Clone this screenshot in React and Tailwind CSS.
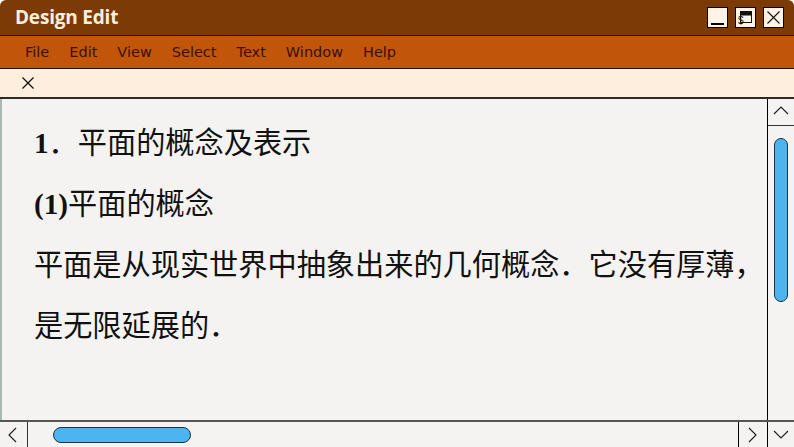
import React from "react";

const menuItems = ["File", "Edit", "View", "Select", "Text", "Window", "Help"];

const Chevron = ({ dir }) => {
  const pts = {
    up: "2,11 9,4 16,11",
    down: "2,5 9,12 16,5",
    left: "11,2 4,9 11,16",
    right: "5,2 12,9 5,16",
  }[dir];
  return (
    <svg width="18" height="18" viewBox="0 0 18 18" fill="none" stroke="#222" strokeWidth="1.2">
      <polyline points={pts} />
    </svg>
  );
};

const WinButton = ({ children }) => (
  <div className="w-[21px] h-[21px] border border-black bg-[#fdf3e6] flex items-center justify-center">
    {children}
  </div>
);

export default function App() {
  return (
    <div className="w-[794px] h-[447px] flex flex-col overflow-hidden bg-[#f5f3f1] rounded-t-[6px]">
      {/* title bar */}
      <div className="h-[36px] shrink-0 bg-[#7b3a06] border-b border-[#2b1200] flex items-center justify-between pl-[15px] pr-[10px]">
        <span className="text-[19px] font-bold text-[#fbeedd] font-['Open_Sans',sans-serif] tracking-[-0.2px]">
          Design Edit
        </span>
        <div className="flex items-center gap-[7px]">
          <WinButton>
            <div className="w-[13px] h-[2px] bg-black mt-[12px]" />
          </WinButton>
          <WinButton>
            <svg width="15" height="15" viewBox="0 0 15 15">
              <rect x="2.5" y="1.5" width="11" height="11" fill="none" stroke="#111" />
              <rect x="2.5" y="1.5" width="11" height="4" fill="#111" />
              <text x="0" y="14" fontSize="10" fontFamily="Liberation Sans, sans-serif" fill="#111">$</text>
            </svg>
          </WinButton>
          <WinButton>
            <svg width="15" height="15" viewBox="0 0 15 15" stroke="#111" strokeWidth="1.1">
              <line x1="1.5" y1="1.5" x2="13.5" y2="13.5" />
              <line x1="13.5" y1="1.5" x2="1.5" y2="13.5" />
            </svg>
          </WinButton>
        </div>
      </div>

      {/* menu bar */}
      <div className="h-[33px] shrink-0 bg-[#c1560b] border-b border-[#2b1200] flex items-center pt-[2px] pl-[25px] gap-[20px] font-['DejaVu_Sans',sans-serif] text-[14.5px] text-[#3a1000]">
        {menuItems.map((m) => (
          <span key={m}>{m}</span>
        ))}
      </div>

      {/* tab bar */}
      <div className="h-[30px] shrink-0 bg-[#fdeedd] border-b-2 border-[#2a2a2a] flex items-center pl-[21px]">
        <svg width="14" height="14" viewBox="0 0 14 14" stroke="#111" strokeWidth="1.2">
          <line x1="1.5" y1="1.5" x2="12.5" y2="12.5" />
          <line x1="12.5" y1="1.5" x2="1.5" y2="12.5" />
        </svg>
      </div>

      {/* content */}
      <div className="flex-1 flex min-h-0">
        <div className="flex-1 min-w-0 border-l-2 border-[#a9b8b2] pl-[32px] pt-[14px] text-[29.2px] leading-[61px] text-[#111] font-['Liberation_Serif','Noto_Sans_CJK_SC',serif]">
          <div>
            <b>1</b>．平面的概念及表示
          </div>
          <div>
            <b>(1)</b>平面的概念
          </div>
          <div className="whitespace-nowrap">平面是从现实世界中抽象出来的几何概念．它没有厚薄，</div>
          <div>是无限延展的．</div>
        </div>
        <div className="w-[27px] shrink-0 border-l border-black flex flex-col">
          <div className="h-[27px] border-b border-[#333] flex items-center justify-center">
            <Chevron dir="up" />
          </div>
          <div className="pt-[12px] flex justify-center pr-[1px]">
            <div className="w-[14px] h-[164px] rounded-full bg-[#4cb4ee] border border-[#1b3346]" />
          </div>
        </div>
      </div>

      {/* horizontal scrollbar */}
      <div className="h-[27px] shrink-0 border-t-2 border-[#555] flex">
        <div className="w-[28px] border-r border-[#333] flex items-center justify-center">
          <Chevron dir="left" />
        </div>
        <div className="flex-1 flex items-center pl-[25px]">
          <div className="w-[138px] h-[16px] rounded-full bg-[#4cb4ee] border border-[#1b3346]" />
        </div>
        <div className="w-[29px] border-l border-black flex items-center justify-center">
          <Chevron dir="right" />
        </div>
        <div className="w-[27px] border-l border-black flex items-center justify-center">
          <Chevron dir="down" />
        </div>
      </div>
    </div>
  );
}
